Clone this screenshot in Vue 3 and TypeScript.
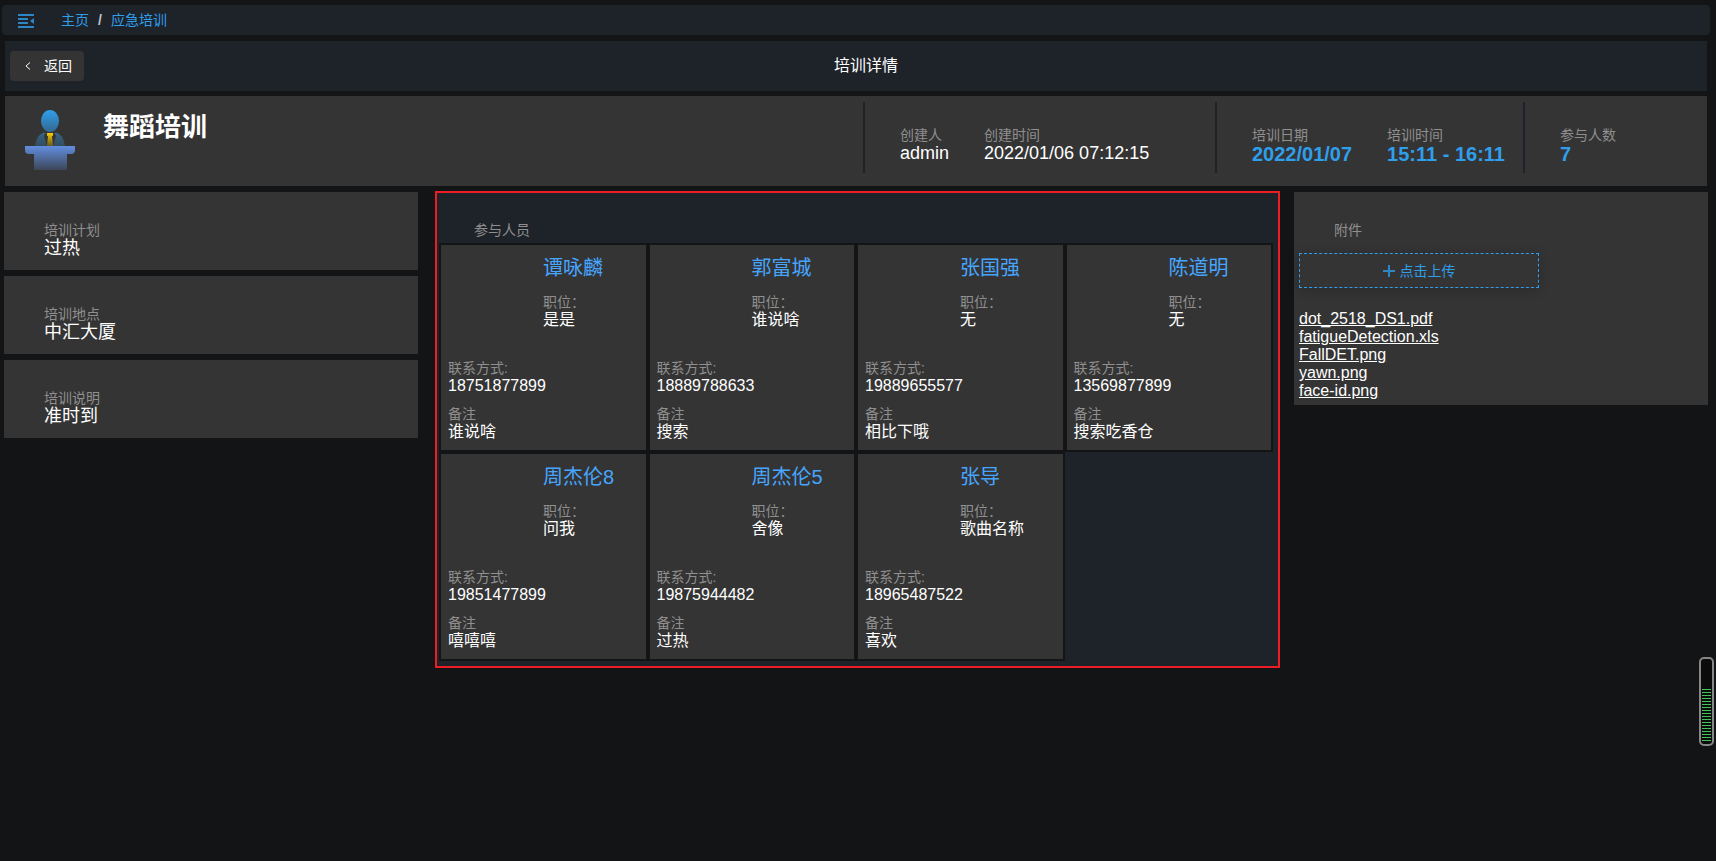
<script setup lang="ts">
interface Field {
  label: string
  value: string
}

interface Person {
  name: string
  position: string
  phone: string
  remark: string
}

const details: Field[] = [
  { label: '培训计划', value: '过热' },
  { label: '培训地点', value: '中汇大厦' },
  { label: '培训说明', value: '准时到' },
]

const people: Person[] = [
  { name: '谭咏麟', position: '是是', phone: '18751877899', remark: '谁说啥' },
  { name: '郭富城', position: '谁说啥', phone: '18889788633', remark: '搜索' },
  { name: '张国强', position: '无', phone: '19889655577', remark: '相比下哦' },
  { name: '陈道明', position: '无', phone: '13569877899', remark: '搜索吃香仓' },
  { name: '周杰伦8', position: '问我', phone: '19851477899', remark: '嘻嘻嘻' },
  { name: '周杰伦5', position: '舍像', phone: '19875944482', remark: '过热' },
  { name: '张导', position: '歌曲名称', phone: '18965487522', remark: '喜欢' },
]

const files: string[] = ['dot_2518_DS1.pdf', 'fatigueDetection.xls', 'FallDET.png', 'yawn.png', 'face-id.png']
</script>

<template>
  <div class="page">
    <nav class="topbar">
      <button class="fold" type="button" aria-label="折叠菜单">
        <svg width="16" height="14" viewBox="0 0 16 14" fill="#2f86c4">
          <rect width="16" height="2" />
          <rect y="4" width="10" height="2" />
          <rect y="8" width="10" height="2" />
          <rect y="12" width="16" height="2" />
          <path d="M16 4v6l-4-3z" />
        </svg>
      </button>
      <a href="#">主页</a>
      <span class="slash">/</span>
      <a href="#">应急培训</a>
    </nav>

    <header class="heading">
      <button class="back" type="button">
        <svg width="6" height="8" viewBox="0 0 6 8" fill="none" stroke="#fff"><path d="M5 0.5 1 4l4 3.5" /></svg>
        <span>返回</span>
      </button>
      <h1>培训详情</h1>
    </header>

    <section class="summary">
      <div class="subject">
        <svg width="50" height="60" viewBox="0 0 50 60">
          <defs>
            <linearGradient id="head" x2="0" y2="1">
              <stop stop-color="#2f9fec" />
              <stop offset="1" stop-color="#33688f" />
            </linearGradient>
            <linearGradient id="suit" x2="0" y2="1">
              <stop stop-color="#34658a" />
              <stop offset="1" stop-color="#344c5c" />
            </linearGradient>
            <linearGradient id="tie" x2="0" y2="1">
              <stop stop-color="#ffd400" />
              <stop offset="0.2" stop-color="#d8b30a" />
              <stop offset="1" stop-color="#66591f" />
            </linearGradient>
            <linearGradient id="desk" x2="0" y2="1">
              <stop stop-color="#628ee0" />
              <stop offset="1" stop-color="#3c4658" />
            </linearGradient>
          </defs>
          <ellipse cx="25" cy="11" rx="9" ry="11" fill="url(#head)" />
          <path d="M19 22.500Q12 24 10 36h30Q38 24 31 22.500l-3 1.500h-6z" fill="url(#suit)" />
          <path d="M20 24l-1 2 3 10h6l3-10-1-2z" fill="#343434" />
          <path d="M22 23h6v3h-1l1 10h-6l1-10h-1z" fill="url(#tie)" />
          <path d="M0 36h50v4q0 4-4 4h-4v16H9V44H4q-4 0-4-4z" fill="url(#desk)" />
        </svg>
        <h2>舞蹈培训</h2>
      </div>
      <dl class="group">
        <div><dt>创建人</dt><dd>admin</dd></div>
        <div><dt>创建时间</dt><dd>2022/01/06 07:12:15</dd></div>
      </dl>
      <dl class="group strong">
        <div><dt>培训日期</dt><dd>2022/01/07</dd></div>
        <div><dt>培训时间</dt><dd>15:11 - 16:11</dd></div>
      </dl>
      <dl class="group strong">
        <div><dt>参与人数</dt><dd>7</dd></div>
      </dl>
    </section>

    <main class="columns">
      <dl class="details">
        <div v-for="item in details" :key="item.label" class="detail">
          <dt>{{ item.label }}</dt>
          <dd>{{ item.value }}</dd>
        </div>
      </dl>

      <section class="members">
        <h3>参与人员</h3>
        <ul class="people">
          <li v-for="person in people" :key="person.name" class="person">
            <div class="intro">
              <h4>{{ person.name }}</h4>
              <p class="label">职位：</p>
              <p>{{ person.position }}</p>
            </div>
            <div class="contact">
              <p class="label">联系方式:</p>
              <p>{{ person.phone }}</p>
            </div>
            <div class="remark">
              <p class="label">备注</p>
              <p>{{ person.remark }}</p>
            </div>
          </li>
        </ul>
      </section>

      <section class="attachments">
        <h3>附件</h3>
        <button class="upload" type="button">
          <svg width="12" height="12" viewBox="0 0 12 12" fill="#2f86c4"><path d="M5 0h2v5h5v2H7v5H5V7H0V5h5z" /></svg>
          <span>点击上传</span>
        </button>
        <ul class="files">
          <li v-for="file in files" :key="file"><a href="#">{{ file }}</a></li>
        </ul>
      </section>
    </main>

    <div class="meter" role="img" aria-label="电量"><div class="level"></div></div>
  </div>
</template>

<style>
body {
  background: #131416;
}
</style>

<style scoped>
.page {
  padding: 5px 6px 0 2px;
  color: #fff;
  font-family: "Liberation Sans", "Noto Sans CJK SC", sans-serif;
  font-size: 16px;
  line-height: 18px;
}

h1, h2, h3, h4, p, dl, dd, ul {
  margin: 0;
  padding: 0;
}

li {
  list-style: none;
}

button {
  border: 0;
  padding: 0;
  color: inherit;
  font: inherit;
  cursor: pointer;
}

.topbar {
  display: flex;
  align-items: center;
  height: 30px;
  padding-left: 16px;
  border-radius: 4px;
  background: #1e2229;
  font-size: 14px;
}

.topbar a {
  color: #2f9fec;
  text-decoration: none;
}

.fold {
  display: flex;
  margin-right: 27px;
  padding-top: 2px;
  background: none;
}

.slash {
  margin: 0 9px;
  font-weight: bold;
  color: #c0c4cc;
}

.heading {
  display: grid;
  grid-template-columns: 84px 1fr 64px;
  align-items: center;
  height: 50px;
  margin: 6px 3px 0 3px;
  padding: 0 5px;
  box-sizing: border-box;
  background: #1e2229;
}

.back {
  display: flex;
  align-items: center;
  justify-self: start;
  gap: 13px;
  height: 30px;
  padding: 0 12px 0 15px;
  border-radius: 4px;
  background: #343434;
  font-size: 14px;
}

h1 {
  font-size: 16px;
  font-weight: normal;
  text-align: center;
}

.summary {
  display: grid;
  grid-template-columns: 858fr 352fr 308fr 184fr;
  height: 90px;
  margin: 5px 3px 0 3px;
  background: #343434;
}

.subject {
  display: flex;
  gap: 28px;
  padding: 14px 20px;
}

h2 {
  font-size: 26px;
  line-height: 34px;
}

.group {
  display: flex;
  gap: 35px;
  height: 71px;
  margin-top: 6px;
  padding: 25px 0 0 35px;
  box-sizing: border-box;
  border-left: 2px solid #1e2229;
  white-space: nowrap;
}

dt, .label, h3 {
  color: #8f8f8f;
  font-size: 14px;
  font-weight: normal;
  line-height: 16px;
}

dd {
  font-size: 18px;
  line-height: 20px;
}

.strong dd {
  color: #2f9fec;
  font-size: 20px;
  font-weight: bold;
  line-height: 22px;
}

.columns {
  display: grid;
  grid-template-columns: 1fr 2fr 1fr;
  align-items: start;
  margin: 5px 2px 0 2px;
}

.details {
  display: grid;
  gap: 6px;
  margin: 1px 12px 0 0;
}

.detail {
  padding: 30px 36px 12px 40px;
  background: #343434;
}

.members {
  margin: 0 2px 0 5px;
  padding: 29px 5px 5px 2px;
  border: 2px solid #ee1c24;
  background: #1e2229;
}

.members h3 {
  padding: 0 0 5px 35px;
}

.people {
  display: grid;
  grid-template-columns: repeat(4, 1fr);
}

.person {
  height: 209px;
  padding: 14px 7px 0;
  box-sizing: border-box;
  border: 2px solid #131416;
  background: #343434;
}

.person p:not(.label) {
  line-height: 20px;
}

.intro {
  height: 101px;
  padding-left: 95px;
}

h4 {
  margin-bottom: 17px;
  color: #46a6ff;
  font-size: 20px;
  font-weight: normal;
  line-height: 18px;
}

.remark {
  margin-top: 10px;
}

.attachments {
  margin: 1px 0 0 12px;
  padding: 30px 5px 5px;
  background: #343434;
}

.attachments h3 {
  padding-left: 35px;
}

.upload {
  display: flex;
  align-items: center;
  justify-content: center;
  gap: 5px;
  width: 240px;
  height: 35px;
  margin: 15px 0 22px;
  border: 1px dashed #2f9fec;
  background: #343434;
  box-shadow: 0 2px 12px rgba(0, 0, 0, 0.2);
  color: #2f9fec;
  font-size: 14px;
}

.files a {
  color: #fff;
}

.meter {
  position: fixed;
  top: 657px;
  right: 2px;
  display: flex;
  align-items: flex-end;
  width: 15px;
  height: 89px;
  padding: 3px 1px;
  box-sizing: border-box;
  border: 2px solid #868686;
  border-radius: 5px;
  background: #0a0b0a;
}

.level {
  width: 100%;
  height: 52px;
  background: repeating-linear-gradient(#3fc45c 0 1px, #0a0b0a 1px 3px);
}
</style>
